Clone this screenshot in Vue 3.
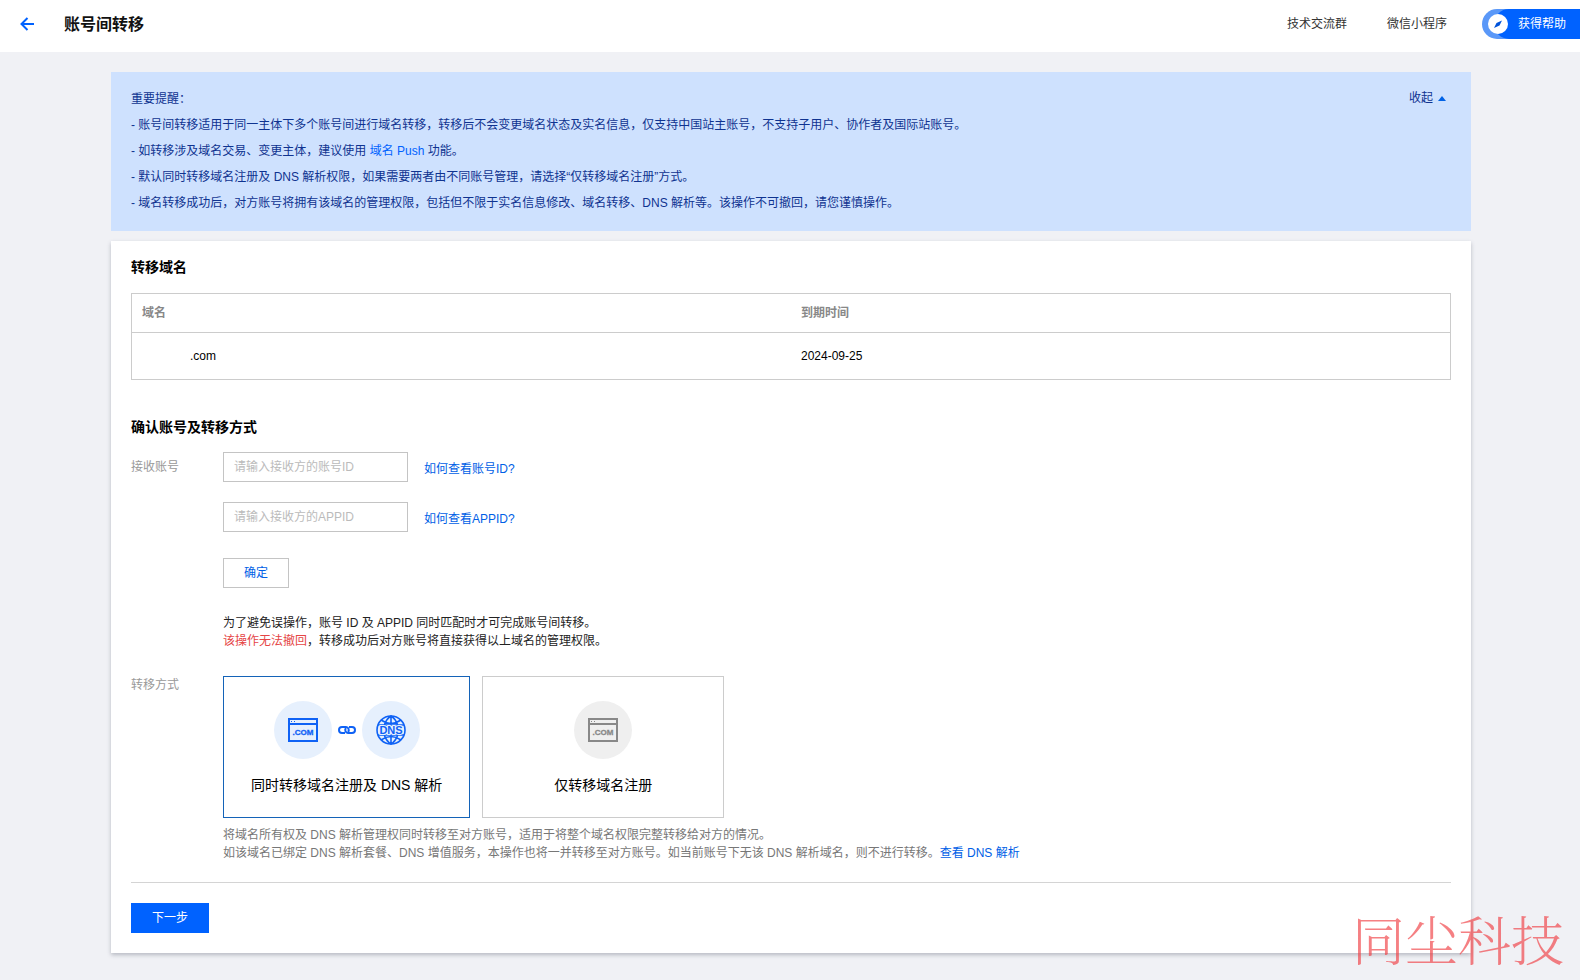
<script setup>
import { ref } from 'vue'

const expanded = ref(true)
const accountId = ref('')
const appId = ref('')
const mode = ref('both')
const domains = [{ suffix: '.com', expires: '2024-09-25' }]
</script>

<template>
  <div class="page">
    <header class="topbar">
      <button class="back" type="button" aria-label="返回">
        <svg width="16" height="16" viewBox="0 0 16 16" fill="none" stroke="currentColor" stroke-width="2">
          <path d="M8.500 2 2.500 8 8.500 14M3 8h12" />
        </svg>
      </button>
      <h1>账号间转移</h1>
      <nav class="nav">
        <a href="#">技术交流群</a>
        <a href="#">微信小程序</a>
      </nav>
      <button class="help" type="button">
        <span class="help-icon">
          <svg width="20" height="20" viewBox="0 0 20 20">
            <circle cx="10" cy="10" r="10" fill="#fff" />
            <path d="M14 6.500 11.500 11.500 6 14 8.500 9Z" fill="#0052d9" />
          </svg>
        </span>
        <span class="help-text">获得帮助</span>
      </button>
    </header>

    <main class="content">
      <section class="notice">
        <div class="notice-text">
          <p>重要提醒：</p>
          <template v-if="expanded">
            <p>- 账号间转移适用于同一主体下多个账号间进行域名转移，转移后不会变更域名状态及实名信息，仅支持中国站主账号，不支持子用户、协作者及国际站账号。</p>
            <p>- 如转移涉及域名交易、变更主体，建议使用 <a href="#">域名 Push</a> 功能。</p>
            <p>- 默认同时转移域名注册及 DNS 解析权限，如果需要两者由不同账号管理，请选择“仅转移域名注册”方式。</p>
            <p>- 域名转移成功后，对方账号将拥有该域名的管理权限，包括但不限于实名信息修改、域名转移、DNS 解析等。该操作不可撤回，请您谨慎操作。</p>
          </template>
        </div>
        <button class="collapse" type="button" @click="expanded = !expanded">
          收起
          <svg width="8" height="5" viewBox="0 0 8 5"><path d="M4 0 8 5H0Z" fill="#0062e6" /></svg>
        </button>
      </section>

      <section class="panel">
        <h2>转移域名</h2>
        <table class="domains">
          <thead>
            <tr><th>域名</th><th>到期时间</th></tr>
          </thead>
          <tbody>
            <tr v-for="d in domains" :key="d.expires">
              <td><span class="mask"></span>{{ d.suffix }}</td>
              <td>{{ d.expires }}</td>
            </tr>
          </tbody>
        </table>

        <h2>确认账号及转移方式</h2>
        <div class="row account">
          <label class="row-label" for="account-id">接收账号</label>
          <div class="row-body">
            <div class="field">
              <input id="account-id" v-model="accountId" type="text" placeholder="请输入接收方的账号ID">
              <a href="#">如何查看账号ID?</a>
            </div>
            <div class="field">
              <input v-model="appId" type="text" aria-label="APPID" placeholder="请输入接收方的APPID">
              <a href="#">如何查看APPID?</a>
            </div>
            <button class="btn confirm" type="button">确定</button>
            <p class="tip">
              为了避免误操作，账号 ID 及 APPID 同时匹配时才可完成账号间转移。<br>
              <span class="danger">该操作无法撤回</span>，转移成功后对方账号将直接获得以上域名的管理权限。
            </p>
          </div>
        </div>

        <div class="row">
          <span id="mode-label" class="row-label">转移方式</span>
          <div class="row-body">
            <div class="modes" role="radiogroup" aria-labelledby="mode-label">
              <label class="mode" :class="{ active: mode === 'both' }">
                <input v-model="mode" type="radio" name="mode" value="both">
                <span class="icons">
                  <span class="disc">
                    <svg width="30" height="24" viewBox="0 0 30 24">
                      <path d="M1 1h28v22H1ZM1 6h28" fill="none" stroke="currentColor" stroke-width="2" />
                      <path d="M3 3h1v1H3ZM6 3h1v1H6Z" fill="currentColor" />
                      <text x="15" y="17" text-anchor="middle" class="icon-com">.COM</text>
                    </svg>
                  </span>
                  <svg width="18" height="8" viewBox="0 0 18 8" fill="none" stroke="currentColor" stroke-width="2">
                    <path d="M7 7H4A3 3 0 0 1 4 1H8A3 3 0 0 1 10 6" />
                    <path d="M11 1H14A3 3 0 0 1 14 7H10A3 3 0 0 1 8 2" />
                  </svg>
                  <span class="disc">
                    <svg width="30" height="30" viewBox="0 0 30 30" fill="none" stroke="currentColor" stroke-width="1.600">
                      <circle cx="15" cy="15" r="14" />
                      <path d="M15 1V10M15 20V29M5 5Q15 12 25 5M5 25Q15 18 25 25M8 11Q10 4 15 1Q20 4 22 11M8 19Q10 26 15 29Q20 26 22 19M2 10H28M2 20H28" />
                      <text x="15" y="19" text-anchor="middle" class="icon-dns">DNS</text>
                    </svg>
                  </span>
                </span>
                <span class="mode-name">同时转移域名注册及 DNS 解析</span>
              </label>
              <label class="mode" :class="{ active: mode === 'register' }">
                <input v-model="mode" type="radio" name="mode" value="register">
                <span class="icons">
                  <span class="disc">
                    <svg width="30" height="24" viewBox="0 0 30 24">
                      <path d="M1 1h28v22H1ZM1 6h28" fill="none" stroke="currentColor" stroke-width="2" />
                      <path d="M3 3h1v1H3ZM6 3h1v1H6Z" fill="currentColor" />
                      <text x="15" y="17" text-anchor="middle" class="icon-com">.COM</text>
                    </svg>
                  </span>
                </span>
                <span class="mode-name">仅转移域名注册</span>
              </label>
            </div>
            <p class="desc">
              将域名所有权及 DNS 解析管理权同时转移至对方账号，适用于将整个域名权限完整转移给对方的情况。<br>
              如该域名已绑定 DNS 解析套餐、DNS 增值服务，本操作也将一并转移至对方账号。如当前账号下无该 DNS 解析域名，则不进行转移。<a href="#">查看 DNS 解析</a>
            </p>
          </div>
        </div>

        <footer class="actions">
          <button class="btn primary" type="button">下一步</button>
        </footer>
      </section>
    </main>

    <div class="watermark">同尘科技</div>
  </div>
</template>

<style>
body {
  background: #f0f1f5;
}
</style>

<style scoped>
.page {
  position: relative;
  box-sizing: border-box;
  min-height: 100vh;
  font-family: "Liberation Sans", "Noto Sans CJK SC", sans-serif;
  font-size: 12px;
  line-height: 18px;
  color: #000;
}
.page * {
  box-sizing: border-box;
}
h1, h2, p {
  margin: 0;
}
button, input {
  font-family: inherit;
  font-size: inherit;
  line-height: inherit;
}
button {
  padding: 0;
  border: 0;
  background: none;
  cursor: pointer;
}
a {
  color: #0060e6;
  text-decoration: none;
}
.topbar {
  display: flex;
  align-items: center;
  height: 52px;
  padding: 0 0 4px 19px;
  background: #fff;
}
.back {
  display: flex;
  margin-right: 29px;
  color: #0062ff;
}
h1 {
  padding-top: 2px;
  font-size: 16px;
  line-height: 24px;
  color: #111;
}
.nav {
  display: flex;
  gap: 40px;
  margin-left: auto;
  margin-right: 35px;
}
.nav a {
  color: #333;
}
.help {
  display: flex;
  height: 30px;
  border-radius: 15px 0 0 15px;
  background: #5a98f8;
  color: #fff;
}
.help-icon {
  position: relative;
  z-index: 1;
  display: flex;
  width: 20px;
  margin: 5px 0 0 6px;
}
.help-text {
  height: 30px;
  margin-left: -14px;
  padding: 0 14px 0 24px;
  border-radius: 15px 0 0 15px;
  background: #0062ff;
  line-height: 30px;
}
.content {
  display: flex;
  flex-direction: column;
  gap: 10px;
  padding: 20px 109px 27px 111px;
}
.notice {
  display: flex;
  justify-content: space-between;
  align-items: flex-start;
  padding: 14px 25px 15px 20px;
  background: #cee1fe;
  color: #0f3390;
  line-height: 26px;
}
.notice a {
  color: #0062ff;
}
.collapse {
  display: flex;
  align-items: center;
  gap: 5px;
  flex: none;
  color: #0f3390;
  line-height: 24px;
}
.panel {
  padding: 16px 20px 20px;
  background: #fff;
  box-shadow: 0 2px 4px rgba(54, 58, 80, 0.3);
}
h2 {
  font-size: 14px;
  line-height: 20px;
}
.domains {
  width: 100%;
  margin: 16px 0 37px;
  border: 1px solid #ccc;
  border-spacing: 0;
  table-layout: fixed;
}
th, td {
  padding: 0 10px;
  text-align: left;
}
th {
  height: 39px;
  border-bottom: 1px solid #ccc;
  color: #888;
  font-weight: 700;
}
td {
  height: 46px;
}
.mask {
  display: inline-block;
  width: 48px;
}
.row {
  display: flex;
}
.row-label {
  flex: none;
  width: 92px;
  color: #999;
}
.account {
  margin-top: 15px;
}
.account .row-label {
  padding-top: 6px;
}
.row-body {
  flex: 1;
}
.field {
  display: flex;
  align-items: center;
  gap: 16px;
  margin-bottom: 20px;
}
.field input {
  width: 185px;
  height: 30px;
  padding: 0 10px;
  border: 1px solid #c4c4c4;
  border-radius: 0;
  outline: none;
  color: #000;
}
.field input::placeholder {
  color: #bbb;
}
.field a {
  padding-top: 3px;
}
.btn {
  height: 30px;
  padding: 0 20px;
  border: 1px solid #c4c4c4;
  background: #fff;
  color: #0060e6;
}
.confirm {
  margin-top: 6px;
}
.tip {
  margin: 26px 0;
  color: #222;
}
.danger {
  color: #e54545;
}
.modes {
  display: flex;
  gap: 12px;
}
.mode {
  position: relative;
  display: flex;
  flex-direction: column;
  align-items: center;
  min-width: 242px;
  height: 142px;
  padding: 24px 27px 0;
  border: 1px solid #ccc;
  cursor: pointer;
}
.mode input {
  position: absolute;
  opacity: 0;
}
.mode.active {
  border-color: #1463b8;
}
.icons {
  display: flex;
  align-items: center;
  gap: 6px;
  color: #888;
}
.active .icons {
  color: #0f62f5;
}
.disc {
  display: flex;
  align-items: center;
  justify-content: center;
  width: 58px;
  height: 58px;
  border-radius: 50%;
  background: #efefef;
}
.active .disc {
  background: #e6f0fd;
}
.icon-com {
  font-size: 8px;
  font-weight: 700;
  fill: currentColor;
  stroke: currentColor;
  stroke-width: 0.3px;
}
.icon-dns {
  font-size: 11px;
  font-weight: 700;
  fill: currentColor;
  stroke: #e6f0fd;
  stroke-width: 2px;
  paint-order: stroke;
}
.mode-name {
  margin-top: 16px;
  font-size: 14px;
  line-height: 20px;
}
.desc {
  margin-top: 8px;
  color: #777;
}
.actions {
  margin-top: 20px;
  padding-top: 20px;
  border-top: 1px solid #d4d4d4;
}
.primary {
  min-width: 78px;
  border-color: #0062ff;
  background: #0062ff;
  color: #fff;
}
.watermark {
  position: absolute;
  right: 16px;
  bottom: 12px;
  font-family: "Noto Serif CJK SC", "Noto Sans CJK SC", serif;
  font-size: 53px;
  font-weight: 300;
  line-height: 60px;
  color: rgba(240, 60, 64, 0.65);
  pointer-events: none;
}
</style>
